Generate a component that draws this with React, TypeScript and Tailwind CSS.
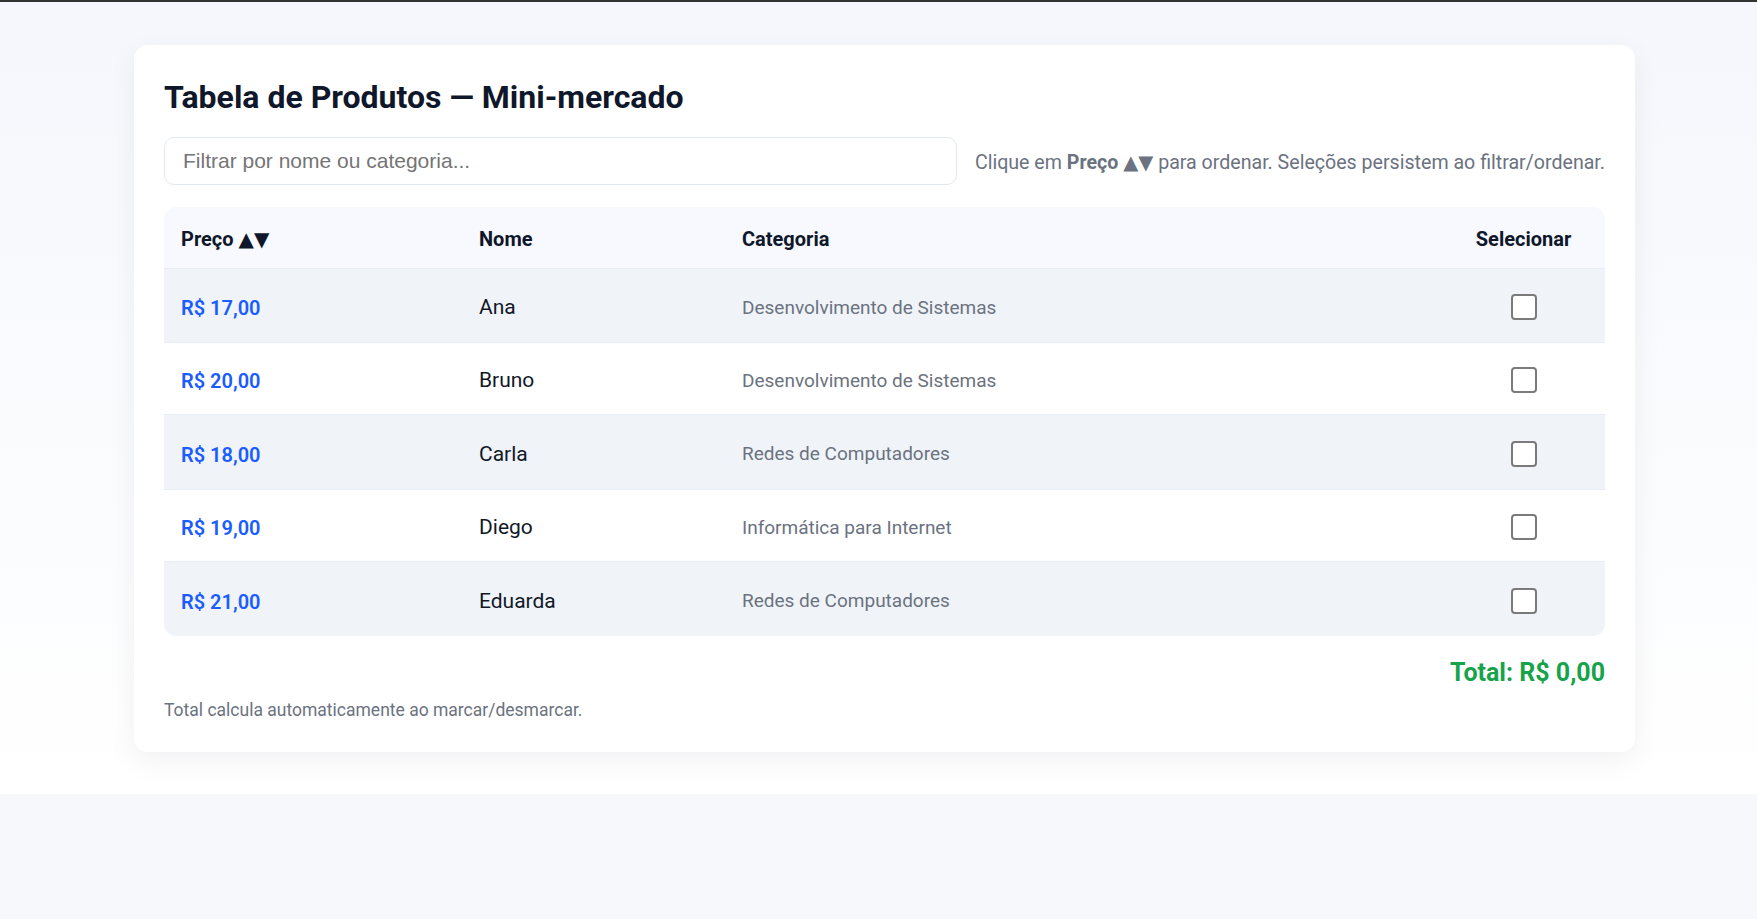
import React, { useState } from 'react';

type Produto = {
  preco: number;
  nome: string;
  categoria: string;
};

const produtos: Produto[] = [
  { preco: 17, nome: 'Ana', categoria: 'Desenvolvimento de Sistemas' },
  { preco: 20, nome: 'Bruno', categoria: 'Desenvolvimento de Sistemas' },
  { preco: 18, nome: 'Carla', categoria: 'Redes de Computadores' },
  { preco: 19, nome: 'Diego', categoria: 'Informática para Internet' },
  { preco: 21, nome: 'Eduarda', categoria: 'Redes de Computadores' },
];

const formatar = (v: number) => 'R$ ' + v.toFixed(2).replace('.', ',');

// setas de ordenação (mesma fonte em todo lugar para ficarem coladas)
const Setas = () => <span className="font-['DejaVu_Sans',sans-serif]">▲▼</span>;

const App = () => {
  const [selecionados, setSelecionados] = useState<string[]>([]);

  const total = produtos
    .filter((p) => selecionados.includes(p.nome))
    .reduce((acc, p) => acc + p.preco, 0);

  const alternar = (nome: string) => {
    setSelecionados((atual) =>
      atual.includes(nome) ? atual.filter((n) => n !== nome) : [...atual, nome]
    );
  };

  return (
    <div className="min-h-screen bg-[#f7f8fb] font-['Roboto','Noto_Sans',sans-serif]">
      <div className="h-[2px] bg-[#333333]"></div>
      <div className="bg-gradient-to-b from-[#f5f7fc] to-white pt-[43px] pb-[42px]">
        <div className="ml-[134px] w-[1501px] rounded-[14px] bg-white px-[30px] pt-[33px] pb-[30px] shadow-[0_8px_30px_rgba(15,23,42,0.06)]">
          <h1 className="text-[32px] leading-[38px] font-bold text-[#0f172a]">
            Tabela de Produtos — Mini-mercado
          </h1>

          <div className="mt-[21px] flex items-center gap-[18px]">
            <input
              type="text"
              placeholder="Filtrar por nome ou categoria..."
              className="h-[48px] flex-1 rounded-[10px] border border-[#e2e8f0] bg-white px-[18px] font-['Liberation_Sans',Arial,sans-serif] text-[21px] text-[#111827] placeholder:text-[#757575] outline-none"
            />
            <p className="mt-[4px] whitespace-nowrap text-[19.6px] text-[#6b7280]">
              Clique em <b className="font-bold">Preço <Setas /></b> para ordenar. Seleções persistem ao filtrar/ordenar.
            </p>
          </div>

          <div className="mt-[22px] overflow-hidden rounded-[12px]">
            <table className="w-full table-fixed border-collapse text-[20px]">
              <thead>
                <tr className="h-[61px] bg-[#f7f9fe] text-left text-[#0f172a]">
                  <th className="w-[298px] px-[17px] pt-[4px] font-bold">
                    Preço <Setas />
                  </th>
                  <th className="w-[263px] px-[17px] pt-[4px] font-bold">Nome</th>
                  <th className="px-[17px] pt-[4px] font-bold">Categoria</th>
                  <th className="w-[163px] px-[17px] pt-[4px] text-center font-bold">Selecionar</th>
                </tr>
              </thead>
              <tbody>
                {produtos.map((p, i) => (
                  <tr
                    key={p.nome}
                    className={`border-t border-[#e9eef6] ${
                      i % 2 === 0 ? 'h-[74.8px] bg-[#f0f4f9]' : 'h-[71.9px] bg-white'
                    }`}
                  >
                    <td className="px-[17px] pt-[5px] font-semibold text-[#1a5cff]">{formatar(p.preco)}</td>
                    <td className="px-[17px] pt-[5px] text-[21px] text-[#111827]">{p.nome}</td>
                    <td className="px-[17px] pt-[5px] text-[19px] text-[#6b7280]">{p.categoria}</td>
                    <td className="px-[17px] text-center">
                      <input
                        type="checkbox"
                        checked={selecionados.includes(p.nome)}
                        onChange={() => alternar(p.nome)}
                        className="h-[26px] w-[26px] appearance-none rounded-[4px] border-2 border-[#7a7a7a] bg-white align-middle checked:bg-[#1a5cff] checked:border-[#1a5cff]"
                      />
                    </td>
                  </tr>
                ))}
              </tbody>
            </table>
          </div>

          <div className="mt-[22px] text-right text-[25px] leading-[30px] font-bold text-[#16a34a]">
            Total: {formatar(total)}
          </div>

          <p className="mt-[10px] text-[17.5px] leading-[24px] text-[#6b7280]">
            Total calcula automaticamente ao marcar/desmarcar.
          </p>
        </div>
      </div>
    </div>
  );
};

export default App;
